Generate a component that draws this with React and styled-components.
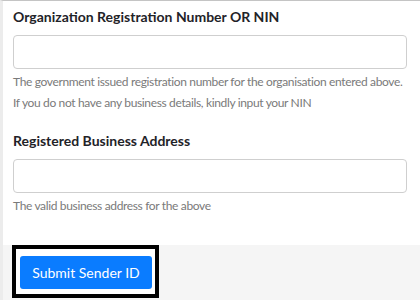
import React from "react";
import styled, { createGlobalStyle } from "styled-components";

const Global = createGlobalStyle`
  html, body { margin: 0; padding: 0; background: #ffffff; }
  body { font-family: Lato, "Open Sans", sans-serif; }
  * { box-sizing: border-box; }
`;

const Page = styled.div`
  width: 420px;
  height: 300px;
  overflow: hidden;
  border-top: 1px solid #c4c4c4;
  border-left: 3px solid #ececec;
  background: #ffffff;
  display: flex;
  flex-direction: column;
`;

const Form = styled.div`
  padding: 6px 13px 30px 10px;
  display: flex;
  flex-direction: column;
`;

const Label = styled.label`
  font-size: 14px;
  line-height: 20px;
  font-weight: 700;
  color: #1f2328;
  margin-top: ${(p) => p.$top || 0}px;
`;

const Input = styled.input`
  margin-top: 8px;
  height: 34px;
  width: 100%;
  border: 1px solid #cfcfcf;
  border-radius: 4px;
  background: #fff;
  font-family: inherit;
  font-size: 14px;
  padding: 0 10px;
  outline: none;
`;

const Hint = styled.p`
  margin: ${(p) => p.$top || 4}px 0 0 0;
  font-size: 12px;
  line-height: 18px;
  letter-spacing: -0.35px;
  white-space: nowrap;
  color: #7a7a7a;
`;

const Footer = styled.div`
  flex: 1;
  background: #f5f5f5;
  padding: 0 0 0 9px;
`;

const FocusFrame = styled.div`
  display: inline-block;
  background: #ffffff;
  border: 4px solid #000000;
  padding: 7px 3px 5px 4px;
`;

const Button = styled.button`
  display: block;
  font-family: inherit;
  font-size: 14px;
  color: #ffffff;
  background: #0a7cff;
  border: none;
  border-radius: 3px;
  height: 33px;
  width: 132px;
  padding: 0;
  cursor: pointer;
`;

export default function App() {
  return (
    <>
      <Global />
      <Page>
        <Form>
          <Label>Organization Registration Number OR NIN</Label>
          <Input type="text" />
          <Hint $top={4}>
            The government issued registration number for the organisation entered above.
          </Hint>
          <Hint $top={3}>If you do not have any business details, kindly input your NIN</Hint>
          <Label $top={19}>Registered Business Address</Label>
          <Input type="text" />
          <Hint $top={4}>The valid business address for the above</Hint>
        </Form>
        <Footer>
          <FocusFrame>
            <Button>Submit Sender ID</Button>
          </FocusFrame>
        </Footer>
      </Page>
    </>
  );
}
